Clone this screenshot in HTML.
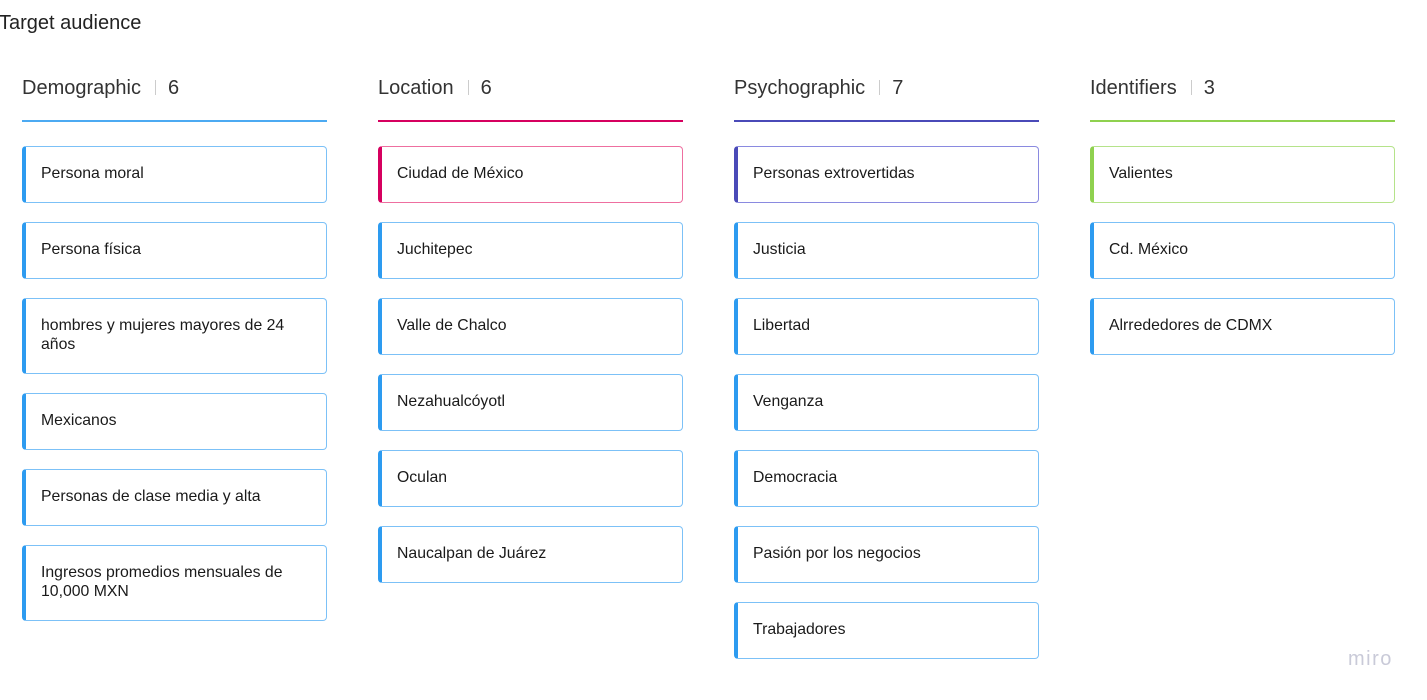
<!DOCTYPE html>
<html><head><meta charset="utf-8"><style>
body{margin:0;width:1427px;height:700px;background:#fff;position:relative;overflow:hidden;font-family:"Liberation Sans",sans-serif;color:#1a1a1a}
.t{position:absolute;left:-1px;top:12px;font-size:20px;color:#222}
.h{position:absolute;top:77px;font-size:20px;color:#333;white-space:nowrap}
.h .s{display:inline-block;width:1px;height:15px;background:#ccc;margin:0 12px 0 14px;vertical-align:-1px}
.l{position:absolute;top:120px;width:305px;height:2px}
.c{position:absolute;width:305px;box-sizing:border-box;border:1px solid #7cc1f7;border-left:4px solid #2d9bf0;border-radius:4px;font-size:15.8px;line-height:19px;padding:0 20px 2px 15px;display:flex;align-items:center}
.m{position:absolute;left:1348px;top:648px;font-size:20px;color:#c9cad8;letter-spacing:1.5px}
</style></head><body>
<div class="t">Target audience</div>
<div class="h" style="left:22px">Demographic<span class="s"></span>6</div>
<div class="h" style="left:378px">Location<span class="s"></span>6</div>
<div class="h" style="left:734px">Psychographic<span class="s"></span>7</div>
<div class="h" style="left:1090px">Identifiers<span class="s"></span>3</div>
<div class="l" style="left:22px;background:#2d9bf0;opacity:.85"></div>
<div class="l" style="left:378px;background:#d6005f"></div>
<div class="l" style="left:734px;background:#4a4ab8"></div>
<div class="l" style="left:1090px;background:#8fd14f"></div>

<div class="c" style="left:22px;top:146px;height:57px">Persona moral</div>
<div class="c" style="left:22px;top:222px;height:57px">Persona física</div>
<div class="c" style="left:22px;top:298px;height:76px">hombres y mujeres mayores de 24 años</div>
<div class="c" style="left:22px;top:393px;height:57px">Mexicanos</div>
<div class="c" style="left:22px;top:469px;height:57px">Personas de clase media y alta</div>
<div class="c" style="left:22px;top:545px;height:76px">Ingresos promedios mensuales de 10,000 MXN</div>

<div class="c" style="left:378px;top:146px;height:57px;border-color:#ee6fa0;border-left-color:#d6005f">Ciudad de México</div>
<div class="c" style="left:378px;top:222px;height:57px">Juchitepec</div>
<div class="c" style="left:378px;top:298px;height:57px">Valle de Chalco</div>
<div class="c" style="left:378px;top:374px;height:57px">Nezahualcóyotl</div>
<div class="c" style="left:378px;top:450px;height:57px">Oculan</div>
<div class="c" style="left:378px;top:526px;height:57px">Naucalpan de Juárez</div>

<div class="c" style="left:734px;top:146px;height:57px;border-color:#8a8ae0;border-left-color:#4a4ab8">Personas extrovertidas</div>
<div class="c" style="left:734px;top:222px;height:57px">Justicia</div>
<div class="c" style="left:734px;top:298px;height:57px">Libertad</div>
<div class="c" style="left:734px;top:374px;height:57px">Venganza</div>
<div class="c" style="left:734px;top:450px;height:57px">Democracia</div>
<div class="c" style="left:734px;top:526px;height:57px">Pasión por los negocios</div>
<div class="c" style="left:734px;top:602px;height:57px">Trabajadores</div>

<div class="c" style="left:1090px;top:146px;height:57px;border-color:#b5e38a;border-left-color:#8fd14f">Valientes</div>
<div class="c" style="left:1090px;top:222px;height:57px">Cd. México</div>
<div class="c" style="left:1090px;top:298px;height:57px">Alrrededores de CDMX</div>

<div class="m">miro</div>
</body></html>
